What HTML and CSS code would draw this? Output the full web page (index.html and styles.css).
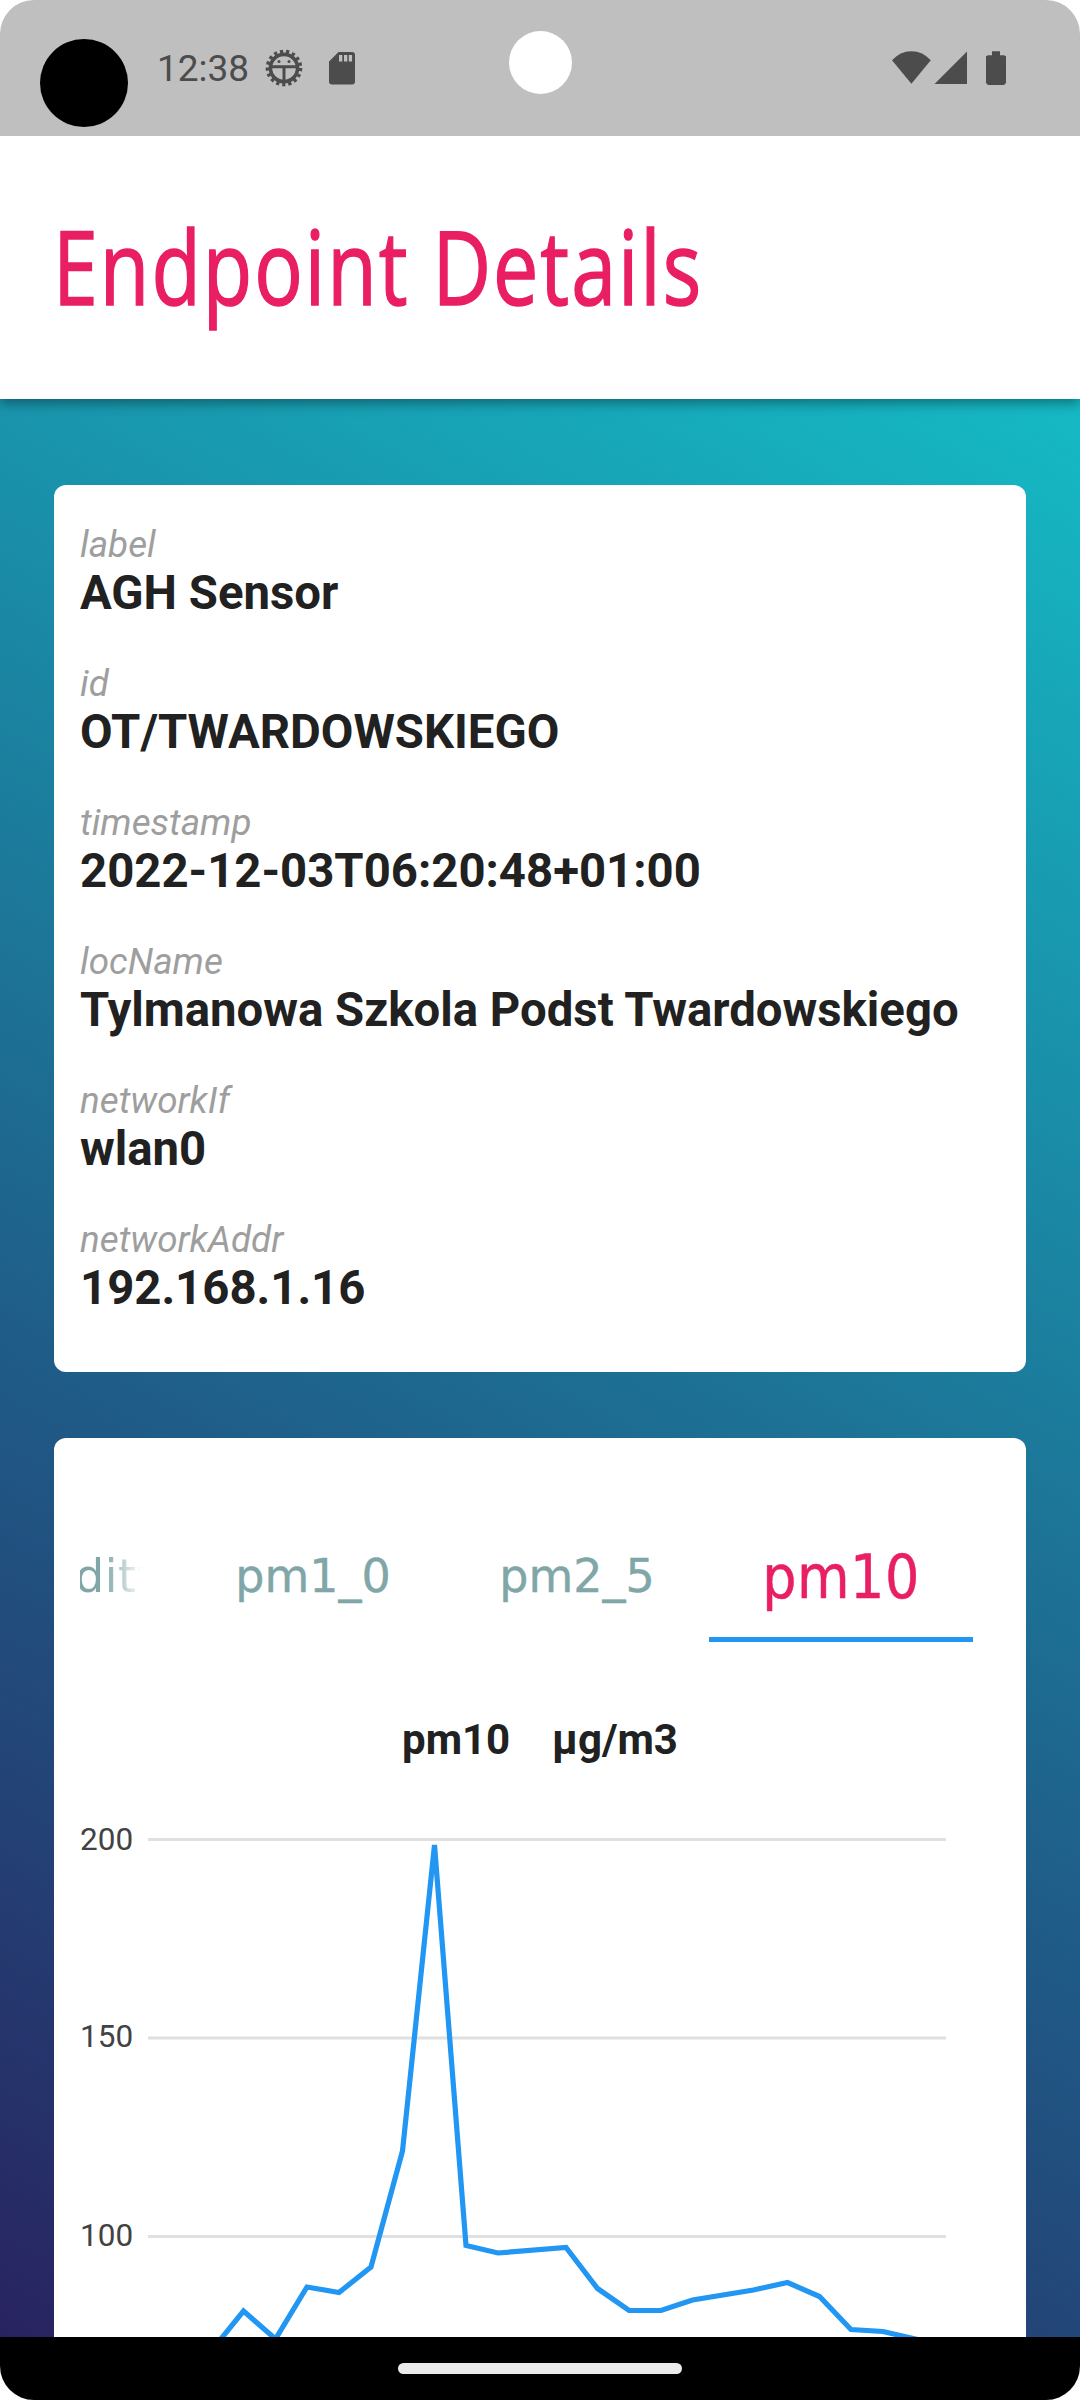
FILE: index.html
```html
<!DOCTYPE html>
<html lang="en">
<head>
<meta charset="utf-8">
<title>Endpoint Details</title>
<link rel="stylesheet" href="styles.css">
</head>
<body>
<div class="phone">
  <div class="status">
    <span class="dot"></span>
    <span class="clock">12:38</span>
    <svg class="bug" viewBox="0 0 38 38"><circle cx="19" cy="19" r="13.600" fill="none" stroke="#4c4c4c" stroke-width="3.600"/><circle cx="19" cy="19" r="16.600" fill="none" stroke="#4c4c4c" stroke-width="3.400" stroke-dasharray="3.200 2.936"/><path d="M5 17.800h28M19 18v15" stroke="#4c4c4c" stroke-width="3" fill="none"/><circle cx="14" cy="12.600" r="1.500" fill="#4c4c4c"/><circle cx="24" cy="12.600" r="1.500" fill="#4c4c4c"/></svg>
    <svg class="sd" viewBox="0 0 26 33"><path fill="#4c4c4c" fill-rule="evenodd" d="M9.500 0H23a3 3 0 0 1 3 3v26.500a3 3 0 0 1-3 3H3a3 3 0 0 1-3-3V9.500zM10 3v6.500h3.300V3zM15 3v6.500h3.300V3zM19.800 3v6.500h3.300V3z"/></svg>
    <span class="camera"></span>
    <svg class="signals" viewBox="0 0 114 36"><g fill="#4c4c4c"><path d="M0 9.300Q8 .2 19.400.2T38.800 9.300L19.400 32.700z"/><path d="M42.500 33L75 .5V33z"/><path d="M100 .2h8v4h4l2 1V32l-2 2H96l-2-2V5.200l2-1h4z"/></g></svg>
  </div>
  <header class="bar"><h1>Endpoint Details</h1></header>
  <main class="content">
    <section class="card info">
      <dl>
        <div><dt>label</dt><dd>AGH Sensor</dd></div>
        <div><dt>id</dt><dd>OT/TWARDOWSKIEGO</dd></div>
        <div><dt>timestamp</dt><dd>2022-12-03T06:20:48+01:00</dd></div>
        <div><dt>locName</dt><dd>Tylmanowa Szkola Podst Twardowskiego</dd></div>
        <div><dt>networkIf</dt><dd>wlan0</dd></div>
        <div><dt>networkAddr</dt><dd>192.168.1.16</dd></div>
      </dl>
    </section>
    <section class="card readings">
      <nav class="tabs">
        <span class="tab cut"><span class="cut-text">dity</span></span>
        <span class="tab">pm1_0</span>
        <span class="tab">pm2_5</span>
        <span class="tab active">pm10</span>
      </nav>
      <h2>pm10 &nbsp; &nbsp;µg/m3</h2>
      <svg class="chart" viewBox="54 1800 972 540">
        <g stroke="#e0e0e0" stroke-width="3"><path d="M148 1839.500H946M148 2038H946M148 2236.500H946"/></g>
        <g class="ticks"><text x="80" y="1849.500">200</text><text x="80" y="2046.500">150</text><text x="80" y="2245.500">100</text></g>
        <path d="M212 2350L243.500 2311L275.500 2339L307 2287L339 2292.500L371 2267L402.500 2151L434.500 1845L466 2245.500L498 2253L566 2247.500L597.500 2288.500L629 2310.500H661L692.500 2300L753.500 2290L787.500 2282.500L819.500 2296.500L851 2329.500L883 2331.500L924 2341" fill="none" stroke="#2196f3" stroke-width="5.200"/>
      </svg>
    </section>
  </main>
  <footer class="navbar"><span class="handle"></span></footer>
</div>
</body>
</html>
```
FILE: styles.css
```css
* { box-sizing: border-box; }
body { margin: 0; background: #fff; font-family: Roboto, sans-serif; }
.phone { width: 1080px; height: 2400px; display: flex; flex-direction: column; border-radius: 34px; overflow: hidden; }
.status { height: 136px; flex: none; background: #bfbfbf; display: flex; align-items: flex-start; position: relative; z-index: 2; }
.dot { width: 88px; height: 88px; margin: 39px 0 0 40px; border-radius: 50%; background: #000; }
.clock { width: 95px; margin: 46px 0 0 29px; font-size: 37px; line-height: 46px; color: #4c4c4c; }
.bug { width: 38px; height: 38px; margin: 49px 0 0 13px; }
.sd { width: 26px; height: 33px; margin: 52px 0 0 26px; }
.camera { width: 63px; height: 63px; margin: 31px 0 0 154px; border-radius: 50%; background: #fff; }
.signals { width: 114px; height: 36px; margin: 51px 0 0 320px; }
.bar { height: 263px; flex: none; background: #fff; position: relative; z-index: 1; box-shadow: 0 4px 12px rgba(0,0,0,.4); padding: 61px 53px 0; }
h1 { margin: 0; font: 500 102px/138px "Open Sans", sans-serif; color: #e91e63; -webkit-text-stroke: 1.500px #e91e63; white-space: nowrap; transform-origin: 0 0; transform: scaleX(.792); width: max-content; letter-spacing: 2.500px; }
.content { height: 1938px; flex: none; overflow: hidden; padding: 86.300px 54px 0; background: linear-gradient(29.2deg, #282360, #1f5d88 40%, #15bac5); }
.card { background: #fff; border-radius: 12px; }
.info { height: 887px; padding: 37px 26px 0; }
dl { margin: 0; }
dl div { height: 139px; }
dt { font-size: 36.800px; line-height: 45px; font-style: italic; color: #9e9e9e; }
dd { margin: 0; font-size: 47.300px; line-height: 52px; font-weight: 700; color: #212121; white-space: nowrap; }
.readings { height: 990px; margin-top: 66px; padding-top: 69px; }
.tabs { display: flex; padding-left: 26px; height: 135px; }
.tab { width: 264px; line-height: 139px; text-align: center; font-family: "DejaVu Sans", sans-serif; font-size: 46px; color: #80a6a8; -webkit-text-stroke: .4px #80a6a8; }
.tab.cut { width: 101px; overflow: hidden; -webkit-text-stroke: 0; }
.cut-text { display: block; width: 60px; overflow: hidden; text-align: left; text-indent: -5px; letter-spacing: .500px; background: linear-gradient(90deg, #80a6a8 40%, transparent 105%); -webkit-background-clip: text; background-clip: text; color: transparent; }
.active { width: 264px; height: 135px; line-height: 140px; font-family: "DejaVu Sans Condensed", "DejaVu Sans", sans-serif; font-stretch: condensed; font-size: 60px; color: #e91e63; -webkit-text-stroke: .5px #e91e63; border-bottom: 5px solid #2196f3; letter-spacing: .5px; }
h2 { margin: 73px 0 0; text-align: center; font-size: 42px; line-height: 50px; font-weight: 700; color: #212121; }
.chart { display: block; width: 972px; height: 540px; margin-top: 35px; }
.ticks { font-size: 31.500px; fill: #424242; }
.navbar { height: 63px; flex: none; background: #000; display: flex; justify-content: center; align-items: center; }
.handle { width: 284px; height: 11px; border-radius: 6px; background: #ebebeb; }
```
